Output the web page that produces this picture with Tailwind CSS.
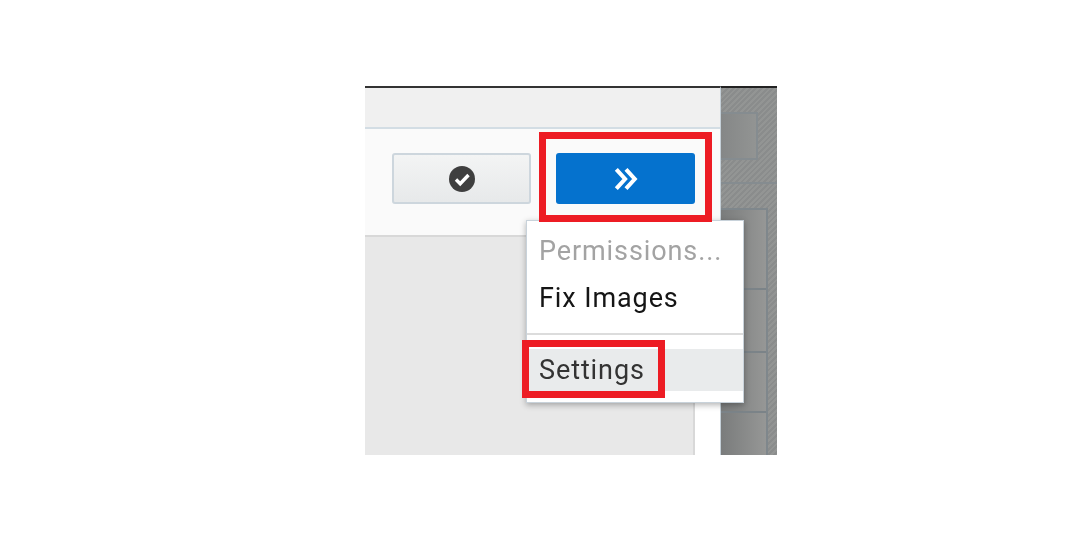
<!DOCTYPE html>
<html lang="en">
<head>
    <meta charset="UTF-8">
    <title>Settings menu</title>
    <script src="https://cdn.jsdelivr.net/npm/@tailwindcss/browser@4"></script>
</head>
<body class="bg-white font-['Roboto',sans-serif] overflow-hidden">
    <div class="relative ml-[365px] mt-[86px] flex h-[369px] w-[412px] blur-[0.6px]">
        <!-- Left panel -->
        <div class="flex w-[356px] flex-col border-t-2 border-t-[#333] border-r border-r-[#c5d0d8]">
            <div class="h-[41px] border-b-2 border-b-[#d3dde4] bg-[#f0f0f0]"></div>
            <div class="flex h-[108px] items-start justify-end gap-[25px] border-b-2 border-b-[#d8d8d8] bg-[#fafafa] pt-[24px] pr-[25px]">
                <button class="flex h-[51px] w-[139px] items-center justify-center rounded-[3px] border-2 border-[#cdd6dd] bg-gradient-to-b from-[#f3f4f4] to-[#e7e9ea]">
                    <svg class="h-[26px] w-[26px]" viewBox="0 0 26 26"><circle cx="13" cy="13" r="13" fill="#3f3f3f"/><path d="M7 13.5l4.2 4.2L19.5 9" fill="none" stroke="#fff" stroke-width="3.4"/></svg>
                </button>
                <button class="flex h-[51px] w-[139px] items-center justify-center rounded-[3px] bg-[#0572ce]">
                    <svg class="h-[24px] w-[24px]" viewBox="0 0 26 26"><path d="M2.5 2.5L12 13 2.5 23.5M13 2.5L22.5 13 13 23.5" fill="none" stroke="#fff" stroke-width="4.4"/></svg>
                </button>
            </div>
            <div class="flex flex-1">
                <div class="w-[330px] border-r-2 border-r-[#d8d8d8] bg-[#e8e8e8]"></div>
                <div class="flex-1 bg-white"></div>
            </div>
        </div>
        <!-- Dark background on the right -->
        <div class="flex flex-1 flex-col border-t-2 border-t-[#222] bg-[repeating-linear-gradient(135deg,#8a8c8c_0px,#8a8c8c_2px,#939594_2px,#939594_4px)]">
            <div class="mt-[24px] h-[48px] w-[37px] border-y-2 border-r-2 border-[#858c90] bg-gradient-to-r from-[#858787] to-[#929493]"></div>
            <div class="mt-[22px] h-[2px] bg-[#858c90]"></div>
            <div class="mt-[24px] flex w-[47px] flex-1 flex-col border-t-2 border-r-2 border-[#7f878c] bg-gradient-to-r from-[#7a7c7c] to-[#969796]">
                <div class="h-[80px] border-b-2 border-[#7b8388]"></div>
                <div class="h-[63px] border-b-2 border-[#7b8388]"></div>
                <div class="h-[60px] border-b-2 border-[#7b8388]"></div>
            </div>
        </div>

        <!-- Context menu -->
        <div class="absolute left-[161px] top-[134px] h-[183px] w-[218px] border border-[#c8d2da] bg-white text-[27px] leading-none tracking-[0.9px] shadow-[0_2px_6px_rgba(0,0,0,0.3)]">
            <div class="pl-[12px] pt-[17px] text-[#a3a3a3]">Permissions...</div>
            <div class="pl-[12px] pt-[20px] text-[#151515]">Fix Images</div>
            <div class="mt-[21px] h-[2px] bg-[#dcdcdc]"></div>
            <div class="mt-[14px] h-[42px] bg-[#e9ebec] pl-[12px] pt-[8px] text-[#333]">Settings</div>
        </div>

        <!-- Red highlight boxes -->
        <div class="absolute left-[174px] top-[46px] h-[90px] w-[173px] border-[7px] border-[#ed1c24]"></div>
        <div class="absolute left-[157px] top-[254px] h-[58px] w-[143px] border-[7px] border-[#ed1c24]"></div>
    </div>
</body>
</html>
